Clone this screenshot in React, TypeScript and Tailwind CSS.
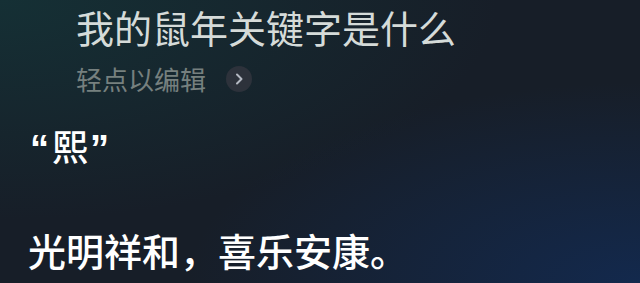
export default function App() {
  return (
    <div
      className="w-[640px] h-[283px] overflow-hidden relative bg-[#171e28]"
      style={{ fontFamily: '"Noto Sans CJK SC", "Noto Sans", sans-serif' }}
    >
      <div className="absolute inset-0 bg-[radial-gradient(ellipse_at_0%_0%,#153035_0%,rgba(21,48,53,0)_55%)]" />
      <div className="absolute inset-0 bg-[radial-gradient(ellipse_at_100%_100%,#13294d_0%,rgba(19,41,77,0)_50%)]" />
      <div className="relative flex flex-col">
        <div className="pl-[76px] pt-[3px] text-[38px] leading-[48px] text-[#d5dbd9]">
          我的鼠年关键字是什么
        </div>
        <div className="pl-[76px] mt-[15px] flex items-center h-[26px]">
          <span className="text-[26px] leading-[26px] text-[#76807f]">轻点以编辑</span>
          <span className="ml-[20px] w-[26px] h-[26px] rounded-full bg-[#2d323b] flex items-center justify-center">
            <svg width="10" height="12" viewBox="0 0 10 12" fill="none">
              <path d="M3 1.5 L7.5 6 L3 10.5" stroke="#b4b9c2" strokeWidth="2" strokeLinecap="round" strokeLinejoin="round" />
            </svg>
          </span>
        </div>
        <div className="pl-[30px] mt-[31px] flex items-start h-[44px] text-white">
          <span
            className="text-[38px] leading-[44px] font-bold mt-[4px]"
            style={{ fontFamily: '"Liberation Sans", sans-serif' }}
          >
            “
          </span>
          <span className="ml-[3px] text-[36px] leading-[44px] font-medium">熙</span>
          <span
            className="ml-[2px] text-[38px] leading-[44px] font-bold mt-[4px]"
            style={{ fontFamily: '"Liberation Sans", sans-serif' }}
          >
            ”
          </span>
        </div>
        <div className="pl-[28px] mt-[61px] text-[38px] leading-[44px] font-medium text-white">
          光明祥和，喜乐安康。
        </div>
      </div>
    </div>
  );
}
